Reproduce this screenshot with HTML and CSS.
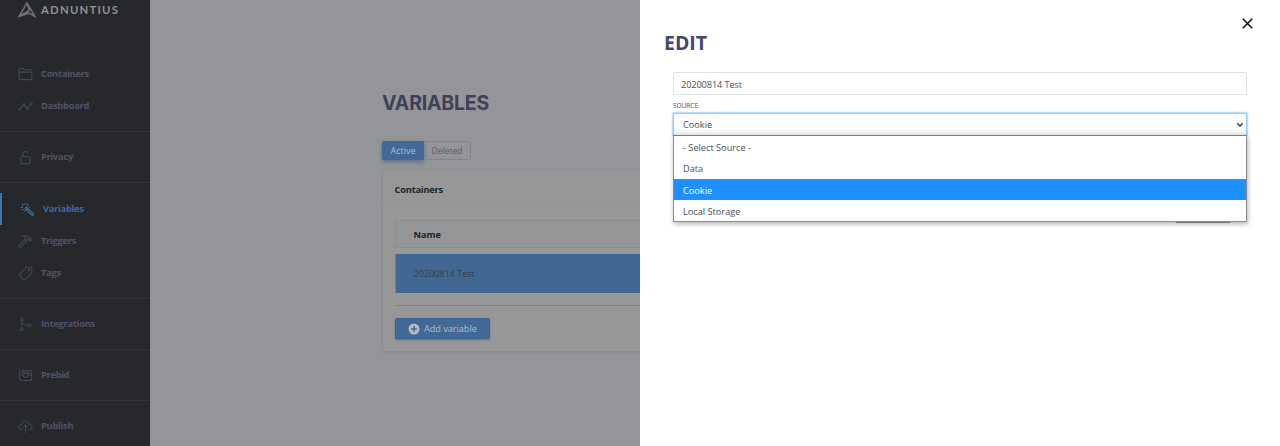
FILE: index.html
```html
<!DOCTYPE html>
<html lang="en">
<head>
<meta charset="utf-8">
<title>Adnuntius - Variables</title>
<link rel="stylesheet" href="styles.css">
</head>
<body>
<div class="app">
  <aside class="sidebar">
    <div class="brand">
      <svg class="brand-mark" width="18" height="16" viewBox="0 0 18 16"><path d="M1 14.500 9 1l8 13.500-6-3.500zM9 1l2.300 7.500L1 14.500M7.500 10.800l3.800-2.300" fill="none" stroke="currentColor" stroke-width="1.500"/></svg>
      <span class="brand-name">ADNUNTIUS</span>
    </div>
    <nav class="nav">
      <div class="group">
        <a class="item"><svg class="icon" viewBox="0 0 16 16"><path d="M1.200 12.500v-10q0-1 1-1h3l1.200 1.500h7.400q1 0 1 1v8.500q0 1-1 1H2.200q-1 0-1-1zM1.200 5.500h13.600"/></svg><span>Containers</span></a>
        <a class="item"><svg class="icon" viewBox="0 0 16 16"><path d="m2.300 10.300 3.100-3.600m1.700.3 2.300 2.500m1.400-.4 3-3.600"/><circle cx="1.700" cy="11" r=".9"/><circle cx="6" cy="6" r=".9"/><circle cx="10" cy="10" r=".9"/><circle cx="14.300" cy="4.800" r=".9"/></svg><span>Dashboard</span></a>
      </div>
      <div class="group">
        <a class="item"><svg class="icon" viewBox="0 0 16 16"><rect x="3" y="7" width="10" height="7.500" rx="1.500"/><path d="M5.500 7V4Q5.500 1.500 8 1.500q2 0 2.400 1.800"/></svg><span>Privacy</span></a>
      </div>
      <div class="group group-main">
        <a class="item active"><svg class="icon" viewBox="0 0 16 16"><path d="m5.600 6.800 1.300-1.300 7.300 7q.5.900-.1 1.400t-1.400 0zM8.600 6.800 7.300 8.100M5.500 1v2M1 5.500h2M2.300 2.300 3.600 3.600M8.700 2.300 7.500 3.500M2.300 8.700l1.200-1.200M5.300 8.500v1.500M9 5.300h1.500"/></svg><span>Variables</span></a>
        <a class="item"><svg class="icon" viewBox="0 0 16 16"><path d="m7.600 5.700-6.400 6.100q-.6.900.2 1.600t1.700.1l6.400-6.200M5.300 2.600q3.500-2.200 6.200.5l1.700 1.800.9-.3 1 1-1.800 1.800-1-1 .1-.9-1-.5-2.200 2.200-2-2L8.800 3.600q-1.600-.9-3.500-1z"/></svg><span>Triggers</span></a>
        <a class="item"><svg class="icon" viewBox="0 0 16 16"><path d="M8.800 1.300h4.900q1 0 1 1v4.900L7.200 14.700q-.7.700-1.400 0l-4.300-4.300q-.7-.7 0-1.400z"/><circle cx="11.800" cy="4.200" r=".8"/></svg><span>Tags</span></a>
      </div>
      <div class="group">
        <a class="item"><svg class="icon" viewBox="0 0 16 16"><circle cx="4" cy="3" r="1.500"/><circle cx="4" cy="13" r="1.500"/><circle cx="12" cy="9" r="1.600"/><path d="M4 4.500v7M4 4.500q.5 4.500 6.400 4.500"/></svg><span>Integrations</span></a>
      </div>
      <div class="group">
        <a class="item"><svg class="icon" viewBox="0 0 16 16"><rect x="1.500" y="2.800" width="13" height="10.500" rx="1.800"/><path d="M1.500 7.500h3.700q.3 2.500 2.800 2.500t2.800-2.500h3.700M4 4.600h8M3.800 6.100h8.400"/></svg><span>Prebid</span></a>
      </div>
      <div class="group">
        <a class="item"><svg class="icon" viewBox="0 0 16 16"><path d="M5.500 11.500H4q-3-.2-3-2.900T4 5.800Q4.500 2.200 8 2.200t4 3.600q3 0 3 2.800T12 11.500h-1.500M8 14.800V6.500M5.700 8.700 8 6.400l2.300 2.300"/></svg><span>Publish</span></a>
      </div>
    </nav>
  </aside>

  <main class="content">
    <h1 class="title">VARIABLES</h1>
    <div class="tabs"><span class="tab tab-active">Active</span><span class="tab tab-idle">Deleted</span></div>
    <section class="card">
      <h2 class="card-title">Containers</h2>
      <div class="card-body">
        <div class="table-head">Name</div>
        <div class="table-row">20200814 Test</div>
        <div class="card-foot">
          <span class="add"><svg width="12" height="12" viewBox="0 0 12 12"><circle class="add-disc" cx="6" cy="6" r="5.500"/><path class="add-plus" d="M6 3v6M3 6h6"/></svg><span>Add variable</span></span>
        </div>
      </div>
    </section>
  </main>

  <section class="panel">
    <svg class="close" width="11" height="11" viewBox="0 0 11 11"><path d="m.8.800 9.400 9.400M10.200.8.800 10.200"/></svg>
    <h1 class="panel-title">EDIT</h1>
    <div class="form">
      <div class="field">20200814 Test</div>
      <div class="label">SOURCE</div>
      <div class="select">
        <span>Cookie</span>
        <svg width="8" height="6" viewBox="0 0 8 6"><path d="m1.200 1.200 2.800 2.800 2.800-2.800"/></svg>
        <div class="under-button"></div>
        <div class="menu">
          <div class="option">- Select Source -</div>
          <div class="option">Data</div>
          <div class="option selected">Cookie</div>
          <div class="option">Local Storage</div>
        </div>
      </div>
    </div>
  </section>
</div>
</body>
</html>
```
FILE: styles.css
```css
* { box-sizing: border-box; }
body { margin: 0; font-family: "Open Sans", "Noto Sans", sans-serif; font-size: 9.2px; color: #495057; }
h1, h2 { margin: 0; }
.app { display: flex; width: 1280px; height: 446px; overflow: hidden; background: #fff; }

.sidebar { width: 150px; flex: none; background: #27282c; color: #52526b; }
.brand { display: flex; align-items: center; gap: 5px; height: 58px; padding: 2px 0 40px 18px; }
.brand-mark { color: #707070; flex: none; }
.brand-name { font: 700 11.3px/16px Lato, sans-serif; letter-spacing: 1.25px; color: #919191; }
.group { padding-bottom: 9px; }
.group + .group { border-top: 1px solid #36373d; padding-top: 9px; }
.group + .group-main { padding-top: 10px; }
.item { display: flex; align-items: center; gap: 8px; height: 32px; padding: 0 0 0 18px; line-height: 14px; font-weight: 700; font-size: 9.3px; letter-spacing: -.28px; }
.item.active { color: #3b68a8; border-left: 2px solid #3d76b0; }
.item.active .icon { color: #417bb0; }
.icon { width: 15px; height: 15px; flex: none; fill: none; stroke: currentColor; stroke-width: 1.15; color: #454657; }

.content { width: 490px; flex: none; overflow: hidden; padding-left: 232px; background: #939598; }
.title { padding-top: 91px; font: 700 19.5px/24px Inter, sans-serif; color: #40405a; letter-spacing: -.22px; }
.tabs { display: flex; margin-top: 26px; height: 19px; line-height: 19px; }
.tab { text-align: center; font-size: 9px; }
.tab-active { width: 42px; color: #b4bdc7; background: #416996; border-radius: 2px 0 0 2px; box-shadow: 0 2px 4px #5a6d91; }
.tab-idle { width: 47px; font-size: 8.8px; line-height: 18px; color: #5a5d63; border: 1px solid #818386; border-left: 0; border-radius: 0 2px 2px 0; letter-spacing: -.1px; }
.card { width: 300px; height: 183px; margin-top: 9px; background: #979797; border: 1px solid #8b8d90; border-radius: 2px; box-shadow: 0 1px 2px #8a8c8f; }
.card-title { height: 38px; padding-left: 11.5px; font-size: 9.3px; line-height: 39px; letter-spacing: -.22px; color: #222527; border-bottom: 1px solid #909398; }
.card-body { padding: 12px 0 0 12px; }
.table-head { height: 28px; padding-left: 17.5px; line-height: 27px; font-weight: 700; color: #202326; background: #949698; border: 1px solid #8b8d90; }
.table-row { height: 39px; margin-top: 6px; padding-left: 17.5px; line-height: 39px; letter-spacing: -.1px; color: #343d48; background: #416893; border-left: 1px solid #63809f; }
.card-foot { margin-top: 12px; padding-top: 12px; border-top: 1px solid #808285; }
.add { display: flex; align-items: center; gap: 4px; width: 95px; height: 21px; padding-left: 12px; font-size: 9.2px; letter-spacing: -.05px; color: #b5bec8; background: #416996; border: 1px solid #3b638f; border-radius: 2px; box-shadow: 0 1px 2px #65717f; }
.add-disc { fill: #b5bbc0; }
.add-plus { stroke: #416996; stroke-width: 1.5; }

.panel { flex: 1; display: flex; flex-direction: column; padding: 18px 33px 0 24px; background: #fff; }
.close { align-self: flex-end; margin-right: -6px; flex: none; }
.close path { stroke: #111; stroke-width: 1.6; fill: none; }
.panel-title { margin-top: 2px; height: 24px; font: 700 19.5px/24px "Open Sans", sans-serif; color: #45466b; letter-spacing: 0; }
.form { padding: 17px 0 0 9px; }
.field { height: 23px; padding-left: 7px; line-height: 23px; letter-spacing: -.1px; border: 1px solid #dde2e7; border-radius: 2px; }
.label { height: 18px; font-size: 6.5px; line-height: 21px; }
.select { position: relative; display: flex; align-items: center; justify-content: space-between; height: 23px; padding: 0 2px 0 9px; border: 1px solid #94c8fb; border-radius: 2px; box-shadow: 0 0 0 1.300px #badcff; background: linear-gradient(#fff 60%, #eee); }
.select svg path { fill: none; stroke: #343a40; stroke-width: 1.5; }
.menu { position: absolute; top: 21px; left: -1px; right: -1px; height: 87px; background: #fff; border: 1px solid #8c8c8c; border-top-color: #66829d; box-shadow: 1px 2px 5px rgba(0,0,0,.3); }
.option { height: 21.3px; padding-left: 9px; line-height: 23.5px; }
.option.selected { color: #fff; background: #1e90ff; }
.under-button { position: absolute; top: 104px; right: 15px; width: 56px; height: 5px; background: #999; border-radius: 2px; }
```
